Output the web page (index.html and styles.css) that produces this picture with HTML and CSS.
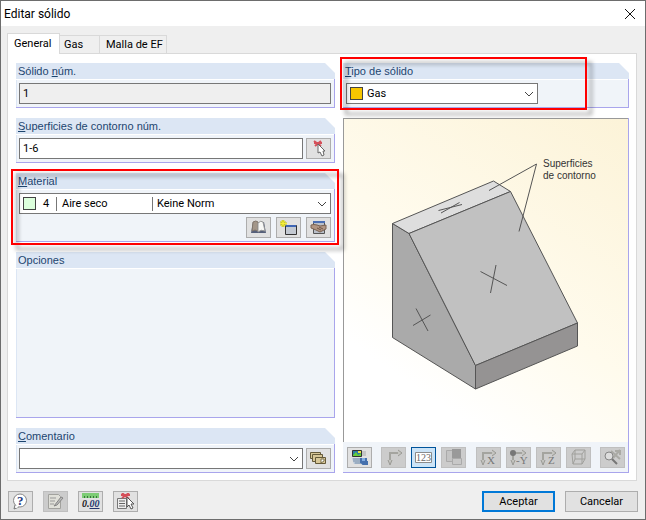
FILE: index.html
```html
<!DOCTYPE html>
<html lang="es">
<head>
<meta charset="utf-8">
<title>Editar sólido</title>
<link rel="stylesheet" href="styles.css">
</head>
<body>
<main class="dialog">
  <header class="titlebar">
    <h1>Editar sólido</h1>
    <button class="close" type="button" aria-label="Cerrar"><svg width="12" height="12" viewBox="0 0 12 12"><path d="M1 1l10 10M11 1L1 11" stroke="#111" fill="none"/></svg></button>
  </header>

  <div class="tabs" role="tablist">
    <button class="tab active" type="button" role="tab" aria-selected="true">General</button>
    <button class="tab tab-gas" type="button" role="tab">Gas</button>
    <button class="tab tab-mesh" type="button" role="tab">Malla de EF</button>
  </div>

  <div class="page">
    <div class="column">
      <section class="group">
        <label class="head" for="solid">Sólido <u>n</u>úm.</label>
        <div class="content"><div class="row"><input class="field" id="solid" value="1" readonly></div></div>
      </section>

      <section class="group">
        <label class="head" for="surfaces"><u>S</u>uperficies de contorno núm.</label>
        <div class="content"><div class="row">
          <input class="field" id="surfaces" value="1-6">
          <button class="tool" type="button" aria-label="Seleccionar superficies"><svg width="19" height="17" viewBox="0 0 19 17"><path d="M5 1l7 5M12 1L6 6M5 3h8" stroke="#d5505a" stroke-width="2"/><path d="M9 4v9l2-1 2 4 2-1-1-4h2z" fill="#fff" stroke="#666"/></svg></button>
        </div></div>
      </section>

      <section class="group marked material">
        <label class="head" for="material"><u>M</u>aterial</label>
        <div class="content">
          <div class="row"><div class="combo">
            <select class="field select-material" id="material"><option>Keine Norm</option></select>
            <div class="combo-parts"><span class="swatch green"></span><span class="part-number">4</span><span class="part-name">Aire seco</span></div>
            <svg class="chevron" width="10" height="6" viewBox="0 0 10 6"><path d="M1 1l4 4 4-4" fill="none" stroke="#444"/></svg>
          </div></div>
          <div class="row actions">
            <button class="tool" type="button" aria-label="Biblioteca de materiales"><svg width="19" height="17" viewBox="0 0 19 17"><path d="M4 3L2 14h15L15 3z" fill="#56607a"/><path d="M4 3q3-2 5 0v9q-3-2-6 0z" fill="#a39689" stroke="#81766c"/><path d="M9 4q3-3 5-1l2 9q-4-2-7 1z" fill="#f7f7f5" stroke="#999"/></svg></button>
            <button class="tool" type="button" aria-label="Nuevo material"><svg width="19" height="17" viewBox="0 0 19 17"><path d="M6.500 6.500h11v9h-11z" fill="#c3c9d2" stroke="#333"/><path d="M7 6h10v2H7z" fill="#3f66b5"/><path d="M4 1v7M1 4.500h7M2 2l4 5M6 2L2 7" stroke="#b5b62a" stroke-width="2"/><path d="M4 1v7M1 4.500h7M2 2l4 5M6 2L2 7" stroke="#f5ee3a"/></svg></button>
            <button class="tool" type="button" aria-label="Editar material"><svg width="19" height="17" viewBox="0 0 19 17"><path d="M4.500 2.500h11v12h-11z" fill="#b9bfc9" stroke="#555"/><path d="M4 2h12v2H4z" fill="#4a6eb4"/><path d="M2 6q3-1 6 0l3 1 6-1v4l-4 2-2 1-4-2-5-2z" fill="#b09583" stroke="#7a6252"/><path d="M8 9l4 2M10 8l4 2" stroke="#6f5546"/></svg></button>
          </div>
        </div>
      </section>

      <section class="group options">
        <h2 class="head">Opciones</h2>
        <div class="content"></div>
      </section>

      <section class="group">
        <label class="head" for="comment"><u>C</u>omentario</label>
        <div class="content"><div class="row">
          <div class="combo"><select class="field" id="comment"><option></option></select><svg class="chevron" width="10" height="6" viewBox="0 0 10 6"><path d="M1 1l4 4 4-4" fill="none" stroke="#444"/></svg></div>
          <button class="tool" type="button" aria-label="Comentarios guardados"><svg width="19" height="17" viewBox="0 0 19 17"><g fill="#d8c797" stroke="#655a38"><path d="M1.500 2.500h10v6h-10z"/><path d="M3.500 4.500h10v7h-10z"/><path d="M6.500 7.500h10v6h-10z"/></g><path d="M12 9h3v2l-3 2z" fill="#fff" stroke="#7a704d"/></svg></button>
        </div></div>
      </section>
    </div>

    <div class="column">
      <section class="group marked type">
        <label class="head" for="type"><u>T</u>ipo de sólido</label>
        <div class="content"><div class="row"><div class="combo combo-type">
          <select class="field select-type" id="type"><option>Gas</option></select>
          <div class="combo-parts"><span class="swatch yellow"></span></div>
          <svg class="chevron" width="10" height="6" viewBox="0 0 10 6"><path d="M1 1l4 4 4-4" fill="none" stroke="#444"/></svg>
        </div></div></div>
      </section>

      <section class="preview">
        <div class="canvas">
          <svg class="drawing" viewBox="344 119 284 320" role="img" aria-label="Superficies de contorno">
            <g stroke="#555" stroke-linejoin="round">
              <path d="M392.500 223.500L409 233.500 475.500 365.500V389L392.500 337.500z" fill="#aaa"/>
              <path d="M392.500 223.500L493.500 181 510.500 191.500 409 233.500z" fill="#dedede"/>
              <path d="M409 233.500L510.500 191.500 577.500 323 475.500 365.500z" fill="#c1c1c1"/>
              <path d="M475.500 365.500L577.500 323V346L475.500 389z" fill="#959393"/>
              <path fill="none" d="M489 190.500L536.500 164 519 231.500M438.500 210.500L462 204.500M441 213L459.500 202.500M480.500 271.500L507 285.500M496 265L490.500 293M413 325.500L430.500 315M416 308.500L428 331"/>
            </g>
            <g class="caption"><text x="543" y="167">Superficies</text><text x="543" y="179">de contorno</text></g>
          </svg>
        </div>
        <div class="viewbar">
          <button class="tool" type="button" aria-label="Cambiar imagen"><svg width="19" height="17" viewBox="0 0 19 17"><path d="M2.500 1.500h9v6h-9z" fill="#2c7aa8" stroke="#333"/><path d="M3 6l3-3 2 3 3-2v3H3z" fill="#64cf36"/><path d="M8 2h3v2H8z" fill="#eee044"/><path d="M12 2h4v5h-4z" fill="#c5c5c5"/><path d="M2 9h9v6H4z" fill="#b6c7d9"/><path d="M3 10h8M3 12h7M5 14h6" stroke="#8195ac"/><path d="M11 9v4h5V9M11 13l2 2h4v-3" fill="#83ade0" stroke="#4570ad" stroke-width="2"/></svg></button>
          <div class="toolset">
            <button class="tool off" type="button" disabled aria-label="Ejes"><svg width="19" height="17" viewBox="0 0 19 17"><path d="M6 14V4h11" fill="none" stroke="#a4a49f" stroke-width="2"/><path d="M4 11l2 5 2-5M14 1l4 3-4 3" fill="#c4c4c0" stroke="#999994"/></svg></button>
            <button class="tool on" type="button" aria-label="Numeración"><svg width="19" height="17" viewBox="0 0 19 17"><path d="M1.500 3.500h16v10h-16z" fill="#fff" stroke="#8b8b8b"/><text class="numbers" x="2" y="12">123</text></svg></button>
            <button class="tool off" type="button" disabled aria-label="Superficies"><svg width="19" height="17" viewBox="0 0 19 17"><path d="M2.500 1.500h6v11h-6z" fill="#c4c4c4" stroke="#aaa"/><path d="M8 0h9v9H8z" fill="#999"/><path d="M8.500 9.500h9v6h-9z" fill="#c8c8c8" stroke="#aaa"/></svg></button>
          </div>
          <div class="toolset">
            <button class="tool off" type="button" disabled aria-label="Vista X"><svg width="19" height="17" viewBox="0 0 19 17"><path d="M4 13V4h11" fill="none" stroke="#a4a49f" stroke-width="2"/><path d="M2 11l2 5 2-5M13 1l4 3-4 3" fill="#c4c4c0" stroke="#999994"/><text class="axis" x="8" y="15">X</text></svg></button>
            <button class="tool off" type="button" disabled aria-label="Vista -Y"><svg width="19" height="17" viewBox="0 0 19 17"><path d="M4 13V4h11" fill="none" stroke="#a4a49f" stroke-width="2"/><path d="M2 11l2 5 2-5M13 1l4 3-4 3" fill="#c4c4c0" stroke="#999994"/><circle cx="4" cy="4" r="3" fill="#777"/><text class="axis" x="7" y="15">-Y</text></svg></button>
            <button class="tool off" type="button" disabled aria-label="Vista Z"><svg width="19" height="17" viewBox="0 0 19 17"><path d="M4 13V4h11" fill="none" stroke="#a4a49f" stroke-width="2"/><path d="M2 11l2 5 2-5M13 1l4 3-4 3" fill="#c4c4c0" stroke="#999994"/><text class="axis" x="9" y="15">Z</text></svg></button>
            <button class="tool off" type="button" disabled aria-label="Isometría"><svg width="19" height="17" viewBox="0 0 19 17"><path d="M3 5h10v10H4zM3 5l3-4h10l-3 4M16 1v9l-3 5M6 1v9h10M6 10l-2 5" fill="none" stroke="#a0a09c" stroke-linejoin="round"/></svg></button>
          </div>
          <button class="tool off" type="button" disabled aria-label="Ampliar todo"><svg width="19" height="17" viewBox="0 0 19 17"><path d="M8 2l9 8M17 1l-7 8M12 2h5v4" fill="none" stroke="#aaaaa5" stroke-width="2"/><circle cx="6" cy="7" r="4" fill="#ddd" stroke="#858585"/><path d="M9 10l5 5" stroke="#777" stroke-width="2"/></svg></button>
        </div>
      </section>
    </div>
  </div>

  <footer class="footer">
    <button class="tool" type="button" aria-label="Ayuda"><svg width="19" height="17" viewBox="0 0 19 17"><path d="M4 12l-1 4 5-2" fill="#fff" stroke="#777"/><circle cx="9" cy="7.500" r="6.500" fill="#fff" stroke="#888"/><path d="M5 12l3 2-3 1z" fill="#fff"/><text class="help" x="6" y="12">?</text></svg></button>
    <button class="tool off" type="button" disabled aria-label="Notas"><svg width="19" height="17" viewBox="0 0 19 17"><path d="M2.500 1.500h10l2 2v12h-12z" fill="#e0e0d9" stroke="#a2a29e"/><path d="M4 5h6M4 8h5M4 11h4" stroke="#999"/><path d="M8 13L15 4l2 1-6 7z" fill="#bbb" stroke="#858585"/></svg></button>
    <button class="tool" type="button" aria-label="Unidades y decimales"><svg width="19" height="17" viewBox="0 0 19 17"><path d="M1 0h17v5H1z" fill="#7dcc75"/><path d="M3.500 3v2M6.500 3v2M9.500 3v2M12.500 3v2M15.500 3v2" stroke="#36763a"/><text class="decimals" x="1" y="14">0.<tspan fill="#24366f" text-decoration="underline">00</tspan></text></svg></button>
    <button class="tool" type="button" aria-label="Seleccionar en gráfico"><svg width="19" height="17" viewBox="0 0 19 17"><path d="M1.500 5.500h9v10h-9z" fill="#eee" stroke="#777"/><path d="M3 8h6M3 10.500h6M3 13h6" stroke="#666"/><path d="M6 0l7 6M13 0L6 5M5 2h9" stroke="#d5505a" stroke-width="2"/><path d="M11 4v10l2-2 2 4 2-1-2-4h3z" fill="#fff" stroke="#555"/></svg></button>
    <button class="command primary" type="button">Aceptar</button>
    <button class="command" type="button">Cancelar</button>
  </footer>
</main>
</body>
</html>
```
FILE: styles.css
```css
* { box-sizing: border-box; }
body { margin: 0; color: #000; font: 11px/14px Roboto, "Liberation Sans", sans-serif; }
button, input, select { font: inherit; color: inherit; }
h1, h2 { margin: 0; font: inherit; }
svg { display: block; }

.dialog { display: flex; flex-direction: column; min-height: 100vh; border: 1px solid #6d6d6d; background: #efefef; }
.titlebar { display: flex; align-items: center; justify-content: space-between; height: 25px; padding: 0 9px 0 3px; background: #fff; }
.titlebar h1 { font-size: 12px; }
.close { padding: 0; border: 0; background: none; }

.tabs { display: flex; align-items: flex-end; height: 27px; padding-left: 6px; }
.tab { height: 18px; padding: 0 4px; border: 1px solid #d9d9d9; border-width: 1px 1px 0 0; background: #efefef; text-align: left; white-space: nowrap; }
.tab.active { position: relative; width: 53px; height: 21px; margin-bottom: -1px; padding: 0 6px; border-left-width: 1px; background: #fff; }
.tab-gas { width: 40px; }
.tab-mesh { width: 67px; padding: 0 0 0 6px; }

.page { flex: 1; display: grid; grid-template-columns: 319fr 286fr; gap: 8px; margin: 0 8px 0 6px; padding: 9px 7px 7px 8px; border: 1px solid #d9d9d9; background: #fff; }
.column { display: flex; flex-direction: column; gap: 10px; min-width: 0; }

.group { position: relative; display: flex; flex-direction: column; background: linear-gradient(#a9a5ec, #a9a5ec) right 10px / 1px 100% no-repeat; }
.head { height: 16px; padding: 1px 2px; background: #dce6f4; color: #1c456f; font: 11px/14px "Liberation Sans", Arial, sans-serif; clip-path: polygon(0 0, calc(100% - 10px) 0, 100% 10px, 100% 100%, 0 100%); }
.content { flex: 1; display: flex; flex-direction: column; gap: 3px; margin: 1px 1px 1px 0; padding: 3px 3px 3px 2px; border-left: 1px solid #dce6f4; background: #f0f4f9; box-shadow: 0 1px #a9a5ec; }
.row { display: flex; align-items: center; gap: 3px; }
.options { flex: 1; }
.actions { justify-content: flex-end; gap: 5px; }

.field { flex: 1; width: 100%; min-width: 0; height: 21px; margin: 0; padding: 0 3px; border: 1px solid #777; border-radius: 0; background: #fff; appearance: none; }
.field:read-only:is(input) { background: #efefef; }
.combo { position: relative; flex: 1; display: flex; }
.combo-type { flex: 0 1 192px; }
.select-material { padding-left: 137px; }
.select-type { padding-left: 20px; }
.combo-parts { position: absolute; inset: 1px auto 1px 4px; display: flex; align-items: center; pointer-events: none; }
.swatch { width: 13px; height: 13px; border: 1px solid #444; }
.green { background: #dcffdc; }
.yellow { background: #f7c600; }
.part-number { width: 20px; padding-left: 7px; }
.part-name { width: 97px; padding-left: 5px; border: solid #777; border-width: 0 1px; }
.chevron { position: absolute; right: 4px; top: 8px; pointer-events: none; }

.tool { flex: none; display: grid; place-items: center; width: 25px; height: 21px; padding: 0; border: 1px solid #adadad; background: #e1e1e1; }
.tool.off { border-color: #bfbfbf; background: #ccc; }
.tool.on { border-color: #00549b; background: #cce4f7; }

.marked::after { content: ""; position: absolute; z-index: 1; border: 2px solid #f00; filter: drop-shadow(5px 5px 2px #0006); pointer-events: none; }
.material::after { inset: -4px -4px -3px -5px; }
.type::after { inset: -6px 42px -2px -3px; }

.preview { flex: 1; display: flex; flex-direction: column; border-right: 1px solid #a9a5ec; border-bottom: 1px solid #a9a5ec; }
.canvas { flex: 1; border: solid #999; border-width: 1px 0 0 1px; background: linear-gradient(35deg, #fff 20%, #fffbed 50%, #fcf3d8); }
.drawing { width: 100%; }
.caption { font: 10px "Liberation Sans", Arial, sans-serif; fill: #333; }
.viewbar { display: flex; justify-content: space-between; align-items: center; height: 30px; padding: 0 3px 0 4px; background: #f0f4f9; }
.toolset { display: flex; gap: 5px; }

.footer { display: flex; align-items: center; gap: 10px; padding: 10px 7px 7px; }
.command { width: 73px; height: 21px; padding: 0; border: 1px solid #adadad; background: #e1e1e1; }
.primary { margin-left: auto; border: 2px solid #0078d7; }
.numbers { font: 10px "Liberation Serif", serif; fill: #666; }
.axis { font: 11px "Liberation Serif", serif; fill: #777; }
.help { font: bold 13px "Liberation Serif", serif; fill: #293b80; }
.decimals { font: italic bold 10px "Liberation Serif", serif; fill: #222; }
```
